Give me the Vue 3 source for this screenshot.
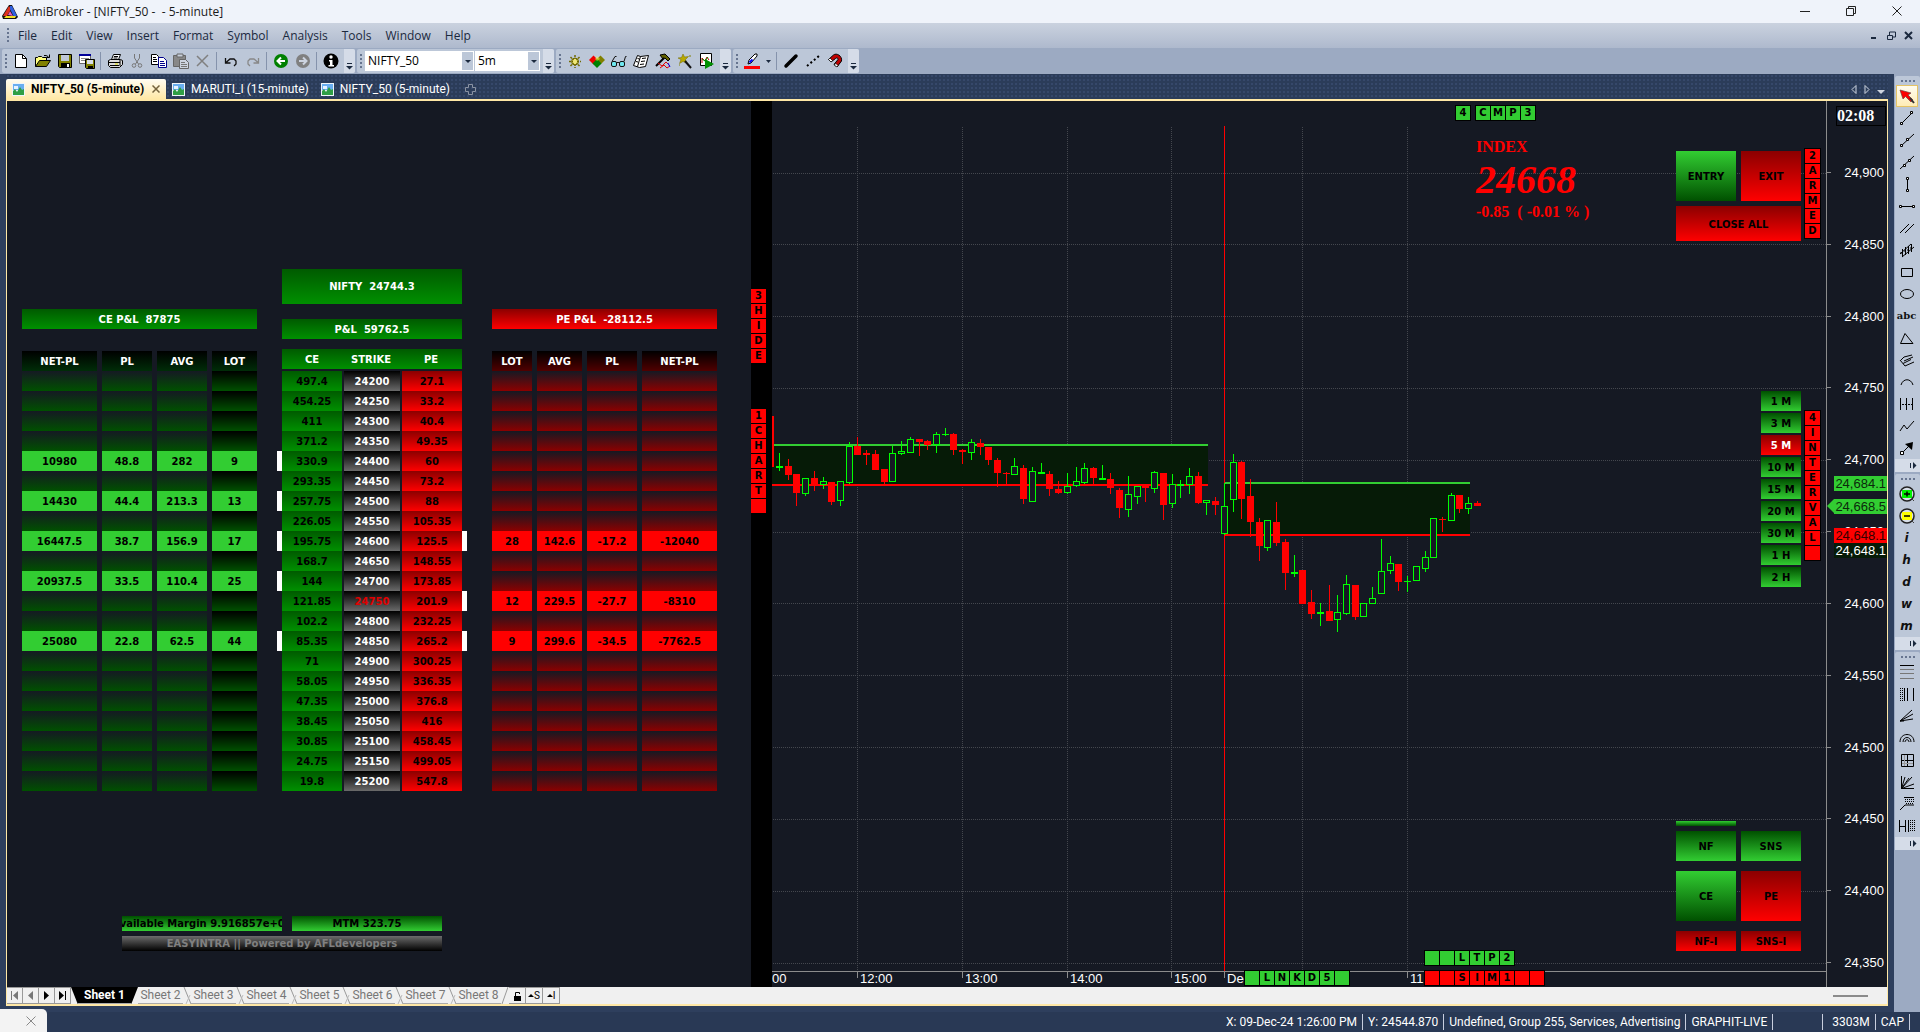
<script setup>
const menus = ['File', 'Edit', 'View', 'Insert', 'Format', 'Symbol', 'Analysis', 'Tools', 'Window', 'Help']

const icons = {
  newFile: '<path d="M2.5 1.5h7l4 4v9h-11z" fill="#fff" stroke="#000"/><path d="M9.5 1.5v4h4" fill="none" stroke="#000"/>',
  open: '<path d="M0.500 13.500v-9h2l1-1h3l1 1h4v3" fill="#ffff80" stroke="#000"/><path d="M0.500 13.500l4-6h11l-4 6z" fill="#808000" stroke="#000"/><path d="M9 2.500h2l2 1 1 1M14.500 1.500v3h-3" fill="none" stroke="#000"/>',
  save: '<path d="M1.500 1.500h13v13h-12l-1-1z" fill="#808000" stroke="#000"/><path d="M4 2h8v6H4z" fill="#c0c8d8"/><path d="M4 10h9v4H4z" fill="#000"/><path d="M10 11h2v3h-2z" fill="#fff"/>',
  saveAll: '<path d="M0.500 1.500h11v9h-11z" fill="#fff" stroke="#666"/><path d="M0 1h12v2H0z" fill="#00009a"/><path d="M2 5.500h8M2 7.500h4" stroke="#888"/><path d="M6.500 6.500h9v9h-8l-1-1z" fill="#808000" stroke="#000"/><path d="M8 7h6v4H8z" fill="#d8dde8"/><path d="M9 13h5v2H9z" fill="#000"/>',
  print: '<path d="M4.500 6.500l2-5h7l-2 5" fill="#fff" stroke="#000"/><path d="M7 3.500h4M6.500 5h4" stroke="#000"/><path d="M1.500 7.500l2-1h10l2 1v4l-3 3h-9l-2-2z" fill="#ddd" stroke="#000"/><path d="M2 9.500h11M3 12.500h9M13 7v6" stroke="#000" fill="none"/><path d="M8 11h3" stroke="#dd0" stroke-width="1"/>',
  cut: '<g fill="none" stroke="#777"><path d="M5.500 1v4l4 6M10.500 1v4l-4 6"/><circle cx="5" cy="12.500" r="1.800"/><circle cx="11" cy="12.500" r="1.800"/></g>',
  copy: '<path d="M.500 1.500h5l2 2v8h-7z" fill="#fff" stroke="#000"/><path d="M2 4.500h3M2 6.500h4M2 8.500h4" stroke="#000"/><path d="M7.500 4.500h5l3 3v7h-8z" fill="#fff" stroke="#00008b"/><path d="M9 8.500h4M9 10.500h5M9 12.500h5" stroke="#00008b"/>',
  paste: '<path d="M.500 2.500h12v11h-12z" fill="#888" stroke="#666"/><path d="M4 1h6v3H4z" fill="#c8cfda" stroke="#666"/><path d="M6.500 6.500h6l3 3v6h-9z" fill="#cdd4e0" stroke="#666"/><path d="M8 9.500h4M8 11.500h6M8 13.500h6" stroke="#777"/>',
  del: '<path d="M2 3l11 11M13 2L2 13" stroke="#808080" stroke-width="1.500" fill="none"/>',
  undo: '<path d="M2.500 5v5h5M3 9.500l4-3.500h4l2 2v3l-2 2" fill="none" stroke="#111" stroke-width="1.300"/>',
  redo: '<path d="M13.500 5v5h-5M13 9.500L9 6H5L3 8v3l2 2" fill="none" stroke="#888" stroke-width="1.300"/>',
  back: '<circle cx="8" cy="8" r="7" fill="#008000"/><path d="M12 8H5M8 4.500L4.500 8 8 11.500" fill="none" stroke="#fff" stroke-width="2"/>',
  fwd: '<circle cx="8" cy="8" r="7" fill="#808080"/><path d="M4 8h7M8 4.500L11.500 8 8 11.500" fill="none" stroke="#ccd3df" stroke-width="2"/>',
  info: '<circle cx="8" cy="8" r="7.500" fill="#000"/><circle cx="8" cy="4" r="1.700" fill="#fff"/><path d="M6 7h3.500v5H11v1.500H5.500V12H7V8.500H6z" fill="#fff"/>',
  gear: '<circle cx="8" cy="8.500" r="3.500" fill="#f0e878" stroke="#706800"/><path d="M8 2v4M8 11v4M2 8.500h4M10 8.500h4M3.500 4l3 3M12.500 4l-3 3M3.500 13l3-3M12.500 13l-3-3" stroke="#706800" stroke-width="1.500" stroke-dasharray="2 1"/>',
  gems: '<path d="M4.500 2.500L9 7l-4.500 4.500L0 7z" fill="#f00000"/><path d="M11.500 2.500L16 7l-4.500 4.500L7 7z" fill="#808000"/><path d="M8 6l4.500 4.500L8 15l-4.500-4.500z" fill="#008000"/><path d="M8 3l3 3-3 2-2-2z" fill="#ffff40" opacity=".5"/>',
  glasses: '<g stroke="#111" fill="#6fe8f0"><rect x=".500" y="8.500" width="5" height="5" rx="1.500"/><rect x="8.500" y="8.500" width="5" height="5" rx="1.500"/><path d="M5.500 9.500h3M1 8.500l3-5h1.500M13 8.500l1.500-5h1" fill="none"/></g>',
  book: '<path d="M4.500 2.500l3 1 8-1-3 11-6 1-6-2z" fill="#fff" stroke="#000"/><path d="M7.500 3.500l-3 10M9 5.500l4-.500M8 8.500l4-.500M7 11.500l4-.500M4.500 5.500l2 .500M3 8.500l2 .500" stroke="#000" fill="none"/>',
  hammer: '<path d="M5 2l5-1 5 5-2 2-3-3-2 1z" fill="#606000" stroke="#000"/><path d="M9 5L1 13" stroke="#000" stroke-width="2"/><path d="M3 10l4 3 4-4 4 4-3 2-3-3-4 3" stroke="#e00000" fill="none"/><path d="M13 10l2 4" stroke="#00f"/>',
  wand: '<path d="M6 1l1.500 3 4-.500-3 3 1.500 4-4-2-3.500 2L4 6.500 1 5l3.500-.500z" fill="#b8a800" stroke="#706800" stroke-width=".500"/><path d="M8 8l6 7" stroke="#111" stroke-width="2"/><path d="M12 3h2M2 12h1" stroke="#808000"/>',
  explore: '<path d="M1.500 .500h11v12h-11z" fill="#fff" stroke="#000"/><path d="M3 10V5l3 3 2-4 2 3" fill="none" stroke="#c00000"/><path d="M3 6l3 2 3-4" stroke="#080" fill="none"/><path d="M6 6l9 5-9 5z" fill="#009000"/>',
  pen: '<path d="M0 13h16v3H0z" fill="#f00"/><path d="M4 11l1-4 6-6h2v2l-6 7z" fill="#fff" stroke="#000"/><path d="M5.500 9.500l3-3" stroke="#00f" stroke-width="2"/>',
  thick: '<path d="M3 13L13 3" stroke="#000" stroke-width="3.500" stroke-linecap="round"/>',
  dots: '<path d="M2 13L14 3" stroke="#000" stroke-width="2" stroke-dasharray="2 2.500"/>',
  magnet: '<path d="M1.500 6.500l5-4.500c3-2.500 9 1 8 6l-4.500 6-3-2.500 4-5c0-2-1.500-2-2.500-1L4 9z" fill="#c00000" stroke="#000"/><path d="M1.500 6.500l1.500-1.500 2.500 2.500L4 9zM8.500 10l2.500 2.500-1.500 1.500-2-2z" fill="#fff" stroke="#000" stroke-width=".700"/>',
  arrow: '<path d="M1 2l3 9 2.500-2.500L12 14l2-2-5-5 3-2z" fill="#f00" stroke="#6b4040" stroke-width=".700"/><path d="M11 10l4 5" stroke="#333" stroke-width="2"/>',
  seg: '<path d="M3 13L13 3" stroke="#000"/><path d="M1.500 12.500h2v2h-2zM11.500 1.500h2v2h-2z" fill="#fff" stroke="#000"/>',
  ray: '<path d="M2 14L15 2" stroke="#000"/><path d="M1.500 12.500h2v2h-2zM7.500 6.500h2v2h-2z" fill="#fff" stroke="#000"/>',
  line: '<path d="M1 15L15 2" stroke="#000"/><path d="M4.500 10.500h2v2h-2zM9.500 5.500h2v2h-2z" fill="#fff" stroke="#000"/>',
  vert: '<path d="M8.500 3v11" stroke="#000"/><path d="M7.500 1.500h2v2h-2zM7.500 13.500h2v2h-2z" fill="#fff" stroke="#000"/>',
  horiz: '<path d="M2 8.500h12" stroke="#000"/><path d="M.500 7.500h2v2h-2zM13.500 7.500h2v2h-2z" fill="#fff" stroke="#000"/>',
  para: '<path d="M1 13L10 4M6 13L15 4" stroke="#000"/>',
  regress: '<path d="M1 12L12 2M3 15L15 5" stroke="#000"/><path d="M3.500 7v8M6.500 5v8M9.500 4v8M12.500 2v8M1 11h2M5 9h2M8 8h2M11 6h2" stroke="#000"/>',
  rect: '<path d="M2.500 4.500h11v8h-11z" fill="none" stroke="#000"/>',
  ellipse: '<ellipse cx="8" cy="8" rx="6.500" ry="4.500" fill="none" stroke="#000"/>',
  tri: '<path d="M1.500 13.500L6 3.500l8 10z" fill="none" stroke="#000"/>',
  fork: '<path d="M2 8l3-3 8-2M1 8l5 6M5 9l9-4M6 14l9-4M4 11.500l8-4" stroke="#000" fill="none"/>',
  arc: '<path d="M2 11c2-7 10-7 12 0" fill="none" stroke="#000"/>',
  cycle: '<path d="M1.500 2v12M7.500 2v12M13.500 2v12" stroke="#000"/><path d="M3 8.500h10" stroke="#000" stroke-dasharray="2 1"/>',
  zig: '<path d="M1 13l4-6 3 4 7-8" fill="none" stroke="#000"/>',
  vec: '<path d="M3 13l7-7" stroke="#000"/><path d="M14 2l-1 8-7-6z" fill="#000"/><path d="M1.500 11.500h3v3h-3z" fill="#fff" stroke="#000"/>',
  zoomIn: '<circle cx="8" cy="8" r="7" fill="#d8dfe8" stroke="#222" stroke-width="1.500"/><path d="M3 4h10v8H3z" fill="#00f000"/><path d="M5 8h6M8 5.500v5" stroke="#000" stroke-width="1.500"/><path d="M13 13l2 2" stroke="#444"/>',
  zoomOut: '<circle cx="8" cy="8" r="7" fill="#d8dfe8" stroke="#222" stroke-width="1.500"/><path d="M3 4h10v8H3z" fill="#ffff00"/><path d="M5 8h6" stroke="#000" stroke-width="1.500"/><path d="M13 13l2 2" stroke="#444"/>',
  fibo: '<path d="M1 1.500h14" stroke="#000"/><path d="M1 5.500h14M1 9.500h14M1 14.500h14" stroke="#777"/>',
  fiboTime: '<path d="M1.500 2v13M3.500 2v13" stroke="#000" stroke-dasharray="1 1"/><path d="M5.500 2v13M8.500 2v13M14.500 2v13" stroke="#000"/>',
  fan: '<path d="M1 13L13 2M1 13l13-7M1 13l13-2M1 13h4" stroke="#000" fill="none"/>',
  arcs: '<path d="M1 12c0-10 14-10 14 0M4 12c0-6 8-6 8 0M6 12c0-3 4-3 4 0" fill="none" stroke="#000"/>',
  gannSq: '<path d="M2.500 2.500h12v12h-12zM8.500 2v12M2 8.500h12" fill="none" stroke="#000"/><path d="M5.500 3v11M3 11.500h11" stroke="#999"/>',
  gannFan: '<path d="M2.500 2v12.500H15M2.500 14.500L6 3M2.500 14.500L13 3M2.500 14.500L15 10M2.500 14.500L10 4" fill="none" stroke="#000"/>',
  pitch: '<path d="M1 14l5-5h9M5 1.500h10" fill="none" stroke="#000"/><path d="M6 3.500h9M6 5.500h9M7 7.500h8" stroke="#000" stroke-dasharray="1 1"/>',
  tzone: '<path d="M.500 2v12M6.500 2v12M1 8.500h6M9.500 2v12" stroke="#000"/><path d="M11.500 2v12M13.500 2v12M15.500 2v12" stroke="#000" stroke-dasharray="1 1"/>',
}

const fileTools = ['newFile', 'open', 'save', 'saveAll', '|', 'print', 'cut', 'copy', 'paste', 'del', '|', 'undo', 'redo', '|', 'back', 'fwd', '|', 'info']
const analysisTools = ['gear', 'gems', 'glasses', 'book', 'hammer', 'wand', 'explore']
const lineTools = ['thick', 'dots', 'magnet']
const sideGroups = [
  ['arrow', 'seg', 'ray', 'line', 'vert', 'horiz', 'para', 'regress', 'rect', 'ellipse', 't:abc', 'tri', 'fork', 'arc', 'cycle', 'zig', 'vec'],
  ['zoomIn', 'zoomOut', 't:i', 't:h', 't:d', 't:w', 't:m'],
  ['fibo', 'fiboTime', 'fan', 'arcs', 'gannSq', 'gannFan', 'pitch', 'tzone'],
]

const docTabs = ['NIFTY_50 (5-minute)', 'MARUTI_I (15-minute)', 'NIFTY_50 (5-minute)']
const sheets = [1, 2, 3, 4, 5, 6, 7, 8]

// strike, CE price, PE price
const chain = [
  [24200, '497.4', '27.1'], [24250, '454.25', '33.2'], [24300, '411', '40.4'], [24350, '371.2', '49.35'],
  [24400, '330.9', '60'], [24450, '293.35', '73.2'], [24500, '257.75', '88'], [24550, '226.05', '105.35'],
  [24600, '195.75', '125.5'], [24650, '168.7', '148.55'], [24700, '144', '173.85'], [24750, '121.85', '201.9'],
  [24800, '102.2', '232.25'], [24850, '85.35', '265.2'], [24900, '71', '300.25'], [24950, '58.05', '336.35'],
  [25000, '47.35', '376.8'], [25050, '38.45', '416'], [25100, '30.85', '458.45'], [25150, '24.75', '499.05'],
  [25200, '19.8', '547.8'],
]
const atm = 24750
const cePos = {
  24400: ['10980', '48.8', '282', '9'],
  24500: ['14430', '44.4', '213.3', '13'],
  24600: ['16447.5', '38.7', '156.9', '17'],
  24700: ['20937.5', '33.5', '110.4', '25'],
  24850: ['25080', '22.8', '62.5', '44'],
}
const pePos = {
  24600: ['28', '142.6', '-17.2', '-12040'],
  24750: ['12', '229.5', '-27.7', '-8310'],
  24850: ['9', '299.6', '-34.5', '-7762.5'],
}
const blank = ['', '', '', '']

// price scale of the chart pane
const H = 886
const W = 1054
const priceY = p => 72 + (24900 - p) * 1.4364
const pct = p => (priceY(p) / H) * 100 + '%'
const prices = [24900, 24850, 24800, 24750, 24700, 24650, 24600, 24550, 24500, 24450, 24400, 24350]
const fmt = p => p.toLocaleString('en-US')
const tags = [
  { p: 24684.1, cls: 'up' },
  { p: 24668.5, cls: 'last' },
  { p: 24648.1, cls: 'down' },
]
const gridX = [85, 190, 295, 399, 530, 635]
const times = [
  { x: 0, t: '00' }, { x: 88, t: '12:00' }, { x: 193, t: '13:00' }, { x: 298, t: '14:00' },
  { x: 402, t: '15:00' }, { x: 455, t: 'Dec' }, { x: 638, t: '11' },
]

// direction, high, body top, body bottom, low
const raw = `g 53 66 68 71;r 59 66 75 80;r 74 74 93 106;g 78 78 94 96;r 71 78 86 91;g 77 81 85 89;r 82 82 102 105;g 81 81 101 106;g 42 46 83 84;r 37 46 55 55;r 50 53 55 65;r 50 54 70 70;r 69 69 82 84;g 46 53 82 82;g 41 51 54 55;g 37 39 53 53;r 39 39 42 56;r 40 41 45 50;g 32 34 45 53;g 28 34 35 36;r 33 34 50 55;r 49 50 52 64;g 39 42 53 60;r 39 43 47 55;r 47 47 60 65;r 58 60 73 87;r 72 73 74 84;g 58 66 75 75;r 65 68 99 104;g 67 71 102 102;g 63 72 74 74;r 71 74 89 96;r 81 89 93 94;g 73 86 93 94;g 67 81 86 87;g 63 68 83 84;r 67 68 78 84;g 65 78 80 80;r 73 79 88 94;r 88 90 108 118;g 76 94 110 117;g 86 86 97 104;r 86 86 88 102;g 71 72 89 93;r 73 73 105 120;g 74 84 104 108;g 80 84 86 98;g 68 76 85 94;r 72 76 103 104;g 100 100 103 115;r 97 101 105 115;g 83 106 134 135;g 54 62 100 112;r 61 62 99 119;r 79 96 122 137;r 118 122 146 161;g 120 120 148 151;r 102 122 143 146;r 139 142 173 190;g 155 172 174 177;r 170 170 204 204;r 190 202 214 219;g 203 212 214 226;r 185 211 221 221;g 195 212 220 232;g 175 184 214 215;r 185 185 217 220;g 203 203 217 217;g 187 198 204 204;g 139 171 194 194;g 156 163 171 174;r 164 164 182 191;g 176 181 182 192;g 166 166 181 181;g 151 157 169 172;g 118 118 158 158;r 117 119 120 132;g 93 95 121 121;r 95 95 109 113;g 97 103 109 114;r 101 103 106 106`
const candles = raw.split(';').map((row, i) => {
  const [dir, high, top, bottom, low] = row.split(' ')
  return { dir, x: Math.floor(7.4 + i * 8.725), high: 299 + +high, top: 299 + +top, bottom: 299 + +bottom, low: 299 + +low }
})

const intervals = ['1 M', '3 M', '5 M', '10 M', '15 M', '20 M', '30 M', '1 H', '2 H']
const letters = s => s.split('')
</script>

<template>
  <div class="app">
    <header class="titlebar">
      <svg class="logo" viewBox="0 0 16 16" width="16" height="16">
        <path d="M7 1h3l6 12-2 2H1l-1-3z" fill="#111" />
        <path d="M7 2L1 12h4l4-7z" fill="#e03020" />
        <path d="M8 2l2 0 5 10-3 1-4-8z" fill="#3060e0" />
        <path d="M2 14l2-2h10l-1 2z" fill="#f4e020" />
        <path d="M6 11l2-4 3 5z" fill="#e060c0" />
      </svg>
      <span class="grow">AmiBroker - [NIFTY_50 -&nbsp; - 5-minute]</span>
      <button class="winbtn" aria-label="Minimize"><svg width="11" height="11"><path d="M0 5.500h10" stroke="#222" /></svg></button>
      <button class="winbtn" aria-label="Restore"><svg width="11" height="11"><path d="M.500 2.500h7v7h-7zM2.500 2.500v-2h7v7h-2" fill="none" stroke="#222" /></svg></button>
      <button class="winbtn" aria-label="Close"><svg width="11" height="11"><path d="M.500.500l9 9M9.500.500l-9 9" stroke="#222" /></svg></button>
    </header>

    <nav class="menubar">
      <span class="grip"></span>
      <button v-for="m in menus" :key="m" class="menu">{{ m }}</button>
      <span class="grow"></span>
      <button class="mdi" aria-label="Minimize sheet"><svg width="9" height="9"><path d="M1 7h5" stroke="#1b293e" stroke-width="2" /></svg></button>
      <button class="mdi" aria-label="Restore sheet"><svg width="9" height="9"><path d="M.500 4.500h5v4h-5zM2.500 4v-3h6v5H6" fill="none" stroke="#1b293e" /></svg></button>
      <button class="mdi" aria-label="Close sheet"><svg width="9" height="9"><path d="M1 1l7 7M8 1L1 8" stroke="#1b293e" stroke-width="2" /></svg></button>
    </nav>

    <div class="toolrow">
      <div class="toolgroup">
        <span class="grip"></span>
        <template v-for="(t, i) in fileTools" :key="i">
          <span v-if="t === '|'" class="sep"></span>
          <button v-else class="tool" :aria-label="t"><svg viewBox="0 0 16 16" width="16" height="16" v-html="icons[t]"></svg></button>
        </template>
        <button class="more" aria-label="More"><svg width="7" height="7"><path d="M1 .500h5" stroke="#1b293e" /><path d="M0 3h7L3.500 6.500z" fill="#1b293e" /></svg></button>
      </div>
      <div class="toolgroup">
        <span class="grip"></span>
        <label class="combo symbol"><select aria-label="Symbol"><option>NIFTY_50</option></select><i></i></label>
        <label class="combo period"><select aria-label="Interval"><option>5m</option></select><i></i></label>
        <button class="more" aria-label="More"><svg width="7" height="7"><path d="M1 .500h5" stroke="#1b293e" /><path d="M0 3h7L3.500 6.500z" fill="#1b293e" /></svg></button>
      </div>
      <div class="toolgroup">
        <span class="grip"></span>
        <button v-for="t in analysisTools" :key="t" class="tool" :aria-label="t"><svg viewBox="0 0 16 16" width="16" height="16" v-html="icons[t]"></svg></button>
        <button class="more" aria-label="More"><svg width="7" height="7"><path d="M1 .500h5" stroke="#1b293e" /><path d="M0 3h7L3.500 6.500z" fill="#1b293e" /></svg></button>
      </div>
      <div class="toolgroup">
        <span class="grip"></span>
        <button class="tool" aria-label="pen"><svg viewBox="0 0 16 16" width="16" height="16" v-html="icons.pen"></svg></button>
        <button class="drop" aria-label="Line colour"><svg width="5" height="3"><path d="M0 0h5L2.500 3z" fill="#1b293e" /></svg></button>
        <span class="sep"></span>
        <button v-for="t in lineTools" :key="t" class="tool" :aria-label="t"><svg viewBox="0 0 16 16" width="16" height="16" v-html="icons[t]"></svg></button>
        <button class="more" aria-label="More"><svg width="7" height="7"><path d="M1 .500h5" stroke="#1b293e" /><path d="M0 3h7L3.500 6.500z" fill="#1b293e" /></svg></button>
      </div>
    </div>

    <div class="body">
      <div class="docarea">
        <div class="tabs">
          <button v-for="(t, i) in docTabs" :key="i" class="tab" :class="{ active: i === 0 }">
            <svg width="13" height="13" viewBox="0 0 13 13">
              <rect width="13" height="13" fill="#eef4fa" /><rect x="1" y="1" width="11" height="6" fill="#69aef0" />
              <path d="M1 12V8l2-2 2 3 3-5 2 3 2-1v6z" fill="#2f9f45" /><path d="M2 3h4v3H2z" fill="#e6f2ff" />
            </svg>
            <span>{{ t }}</span>
            <svg v-if="i === 0" class="tabclose" width="8" height="8"><path d="M.500.500l7 7M7.500.500l-7 7" stroke="#75633d" stroke-width="1.500" /></svg>
          </button>
          <button class="addtab" aria-label="New tab"><svg width="11" height="11"><path d="M3.500.500h4v3h3v4h-3v3h-4v-3h-3v-4h3z" fill="none" stroke="#8a93a3" /></svg></button>
          <span class="grow"></span>
          <div class="tabnav">
            <svg width="6" height="9"><path d="M5 .500v8L1 4.500z" fill="none" stroke="#ced4df" /></svg>
            <svg width="6" height="9"><path d="M1 .500v8l4-4z" fill="none" stroke="#ced4df" /></svg>
            <svg class="fill" width="8" height="4"><path d="M0 0h8L4 4z" fill="#ced4df" /></svg>
          </div>
        </div>

        <main class="frame">
          <div class="panes">
            <section class="chainpane">
              <div class="columns">
                <div class="side">
                  <div class="bar green">CE P&amp;L&nbsp; 87875</div>
                  <table class="grid ce">
                    <colgroup><col class="w75" /><col class="w55" /><col class="w55" /><col class="w50" /></colgroup>
                    <thead><tr><th>NET-PL</th><th>PL</th><th>AVG</th><th>LOT</th></tr></thead>
                    <tbody>
                      <tr v-for="r in chain" :key="r[0]" :class="{ held: cePos[r[0]] }">
                        <td v-for="(v, j) in cePos[r[0]] || blank" :key="j">{{ v }}</td>
                      </tr>
                    </tbody>
                  </table>
                </div>
                <div class="middle">
                  <div class="bar green tall">NIFTY&nbsp; 24744.3</div>
                  <div class="bar green total">P&amp;L&nbsp; 59762.5</div>
                  <table class="grid strikes">
                    <colgroup><col class="w60" /><col class="w58" /><col class="w62" /></colgroup>
                    <thead><tr><th>CE</th><th>STRIKE</th><th>PE</th></tr></thead>
                    <tbody>
                      <tr v-for="r in chain" :key="r[0]">
                        <td class="call" :class="{ mark: cePos[r[0]] }">{{ r[1] }}</td>
                        <td class="strike" :class="{ atm: r[0] === atm }">{{ r[0] }}</td>
                        <td class="put" :class="{ mark: pePos[r[0]] }">{{ r[2] }}</td>
                      </tr>
                    </tbody>
                  </table>
                </div>
                <div class="side pe-side">
                  <div class="bar red">PE P&amp;L&nbsp; -28112.5</div>
                  <table class="grid pe">
                    <colgroup><col class="w40" /><col class="w50" /><col class="w55" /><col class="w80" /></colgroup>
                    <thead><tr><th>LOT</th><th>AVG</th><th>PL</th><th>NET-PL</th></tr></thead>
                    <tbody>
                      <tr v-for="r in chain" :key="r[0]" :class="{ held: pePos[r[0]] }">
                        <td v-for="(v, j) in pePos[r[0]] || blank" :key="j">{{ v }}</td>
                      </tr>
                    </tbody>
                  </table>
                </div>
              </div>
              <div class="account">
                <div class="acc"><span>Available Margin 9.916857e+05</span></div>
                <div class="acc"><span>MTM 323.75</span></div>
                <div class="acc brand"><span>EASYINTRA || Powered by AFLdevelopers</span></div>
              </div>
            </section>

            <div class="rail">
              <div class="cells vert red"><b v-for="(c, i) in letters('3HIDE')" :key="i">{{ c }}</b></div>
              <div class="cells vert red second"><b v-for="(c, i) in letters('1CHART ')" :key="i">{{ c }}</b></div>
            </div>

            <section class="chartpane">
              <div class="plot">
                <svg class="canvas" :viewBox="`0 0 ${W} ${H}`" preserveAspectRatio="none" shape-rendering="crispEdges">
                  <g stroke="#44474e" stroke-dasharray="1 1">
                    <line v-for="p in prices" :key="p" x1="1" :x2="W" :y1="Math.floor(priceY(p)) + 0.5" :y2="Math.floor(priceY(p)) + 0.5" />
                    <line v-for="x in gridX" :key="x" :x1="x + 0.5" :x2="x + 0.5" y1="26" y2="870" />
                  </g>
                  <rect x="0" y="344" width="436" height="41" fill="#061b07" />
                  <rect x="453" y="382" width="245" height="53" fill="#061b07" />
                  <rect x="2" y="343" width="434" height="2" fill="#32cd32" />
                  <rect x="0" y="383" width="436" height="2" fill="#f00" />
                  <rect x="452" y="25" width="1" height="845" fill="#f00" />
                  <rect x="453" y="381" width="245" height="2" fill="#32cd32" />
                  <rect x="453" y="433" width="245" height="2" fill="#f00" />
                  <rect x="0" y="315" width="2" height="51" fill="#f00" />
                  <g v-for="(c, i) in candles" :key="i">
                    <rect :x="c.x" :y="c.high" width="1" :height="c.low - c.high" :fill="c.dir === 'g' ? '#0f0' : '#f00'" />
                    <rect :x="c.x - 3" :y="c.top" width="7" :height="c.bottom - c.top" :fill="c.dir === 'g' ? '#0f0' : '#f00'" />
                    <rect v-if="c.dir === 'g' && c.bottom - c.top > 2" :x="c.x - 2" :y="c.top + 1" width="5" :height="c.bottom - c.top - 2" fill="#151923" />
                  </g>
                  <g fill="#8c8c8c">
                    <rect x="0" y="870" :width="W" height="1" />
                    <rect v-for="x in gridX" :key="x" :x="x" y="870" width="1" height="7" />
                    <rect x="452" y="870" width="1" height="7" />
                  </g>
                </svg>
                <span v-for="t in times" :key="t.t" class="time" :style="{ left: (t.x / W) * 100 + '%' }">{{ t.t }}</span>

                <div class="cells green top4"><b>4</b></div>
                <div class="cells green cmp"><b v-for="c in letters('CMP3')" :key="c">{{ c }}</b></div>
                <div class="index">
                  <p>INDEX</p>
                  <p class="big">24668</p>
                  <p>-0.85&nbsp; ( -0.01 % )</p>
                </div>
                <div class="orders">
                  <button class="btn lime">ENTRY</button>
                  <button class="btn crimson">EXIT</button>
                  <button class="btn crimson wide">CLOSE ALL</button>
                </div>
                <div class="cells vert red armed"><b v-for="c in letters('2ARMED')" :key="c">{{ c }}</b></div>
                <div class="intervals">
                  <button v-for="t in intervals" :key="t" class="btn" :class="t === '5 M' ? 'crimson on' : 'rise'">{{ t }}</button>
                </div>
                <div class="cells vert red interval"><b v-for="(c, i) in letters('4INTERVAL ')" :key="i">{{ c }}</b></div>
                <div class="quick">
                  <button class="btn lime thin" aria-label="Spot"></button><span></span>
                  <button class="btn rise mid">NF</button><button class="btn rise mid">SNS</button>
                  <button class="btn lime tallb">CE</button><button class="btn crimson tallb">PE</button>
                  <button class="btn crimson">NF-I</button><button class="btn crimson">SNS-I</button>
                </div>
                <div class="cells green ltp"><b v-for="(c, i) in letters('  LTP2')" :key="i">{{ c }}</b></div>
                <div class="cells red sim"><b v-for="(c, i) in letters('  SIM1  ')" :key="i">{{ c }}</b></div>
                <div class="cells green lnk"><b v-for="(c, i) in letters(' LNKD5 ')" :key="i">{{ c }}</b></div>
              </div>
              <div class="axis">
                <div class="clock">02:08</div>
                <span v-for="p in prices" :key="p" class="price" :style="{ top: pct(p) }">{{ fmt(p) }}</span>
                <span v-for="t in tags" :key="t.p" class="tag" :class="t.cls" :style="{ top: pct(t.p) }">{{ fmt(t.p) }}</span>
                <span class="tag below" :style="{ top: pct(24648.1) }">24,648.1</span>
              </div>
            </section>
          </div>

          <footer class="sheets">
            <button class="nav" aria-label="First"><svg width="9" height="9"><path d="M1.500 0v9" stroke="#777" stroke-width="1" /><path d="M8 0v9L3 4.500z" fill="#777" /></svg></button>
            <button class="nav" aria-label="Previous"><svg width="9" height="9"><path d="M7 0v9L2 4.500z" fill="#777" /></svg></button>
            <button class="nav" aria-label="Next"><svg width="9" height="9"><path d="M2 0v9l5-4.500z" fill="#000" /></svg></button>
            <button class="nav" aria-label="Last"><svg width="9" height="9"><path d="M7.500 0v9" stroke="#000" stroke-width="1" /><path d="M1 0v9l5-4.500z" fill="#000" /></svg></button>
            <template v-for="s in sheets" :key="s">
              <button class="sheet" :class="{ current: s === 1 }">Sheet {{ s }}</button>
              <svg v-if="s > 1" class="slash" width="9" height="17"><path v-if="s < 8" d="M1 0l7 17" stroke="#999" /><path v-if="s < 8" d="M7 8L3 17" stroke="#bbb" /><path v-else d="M7 0L1 17" stroke="#999" /></svg>
            </template>
            <button class="nav lock" aria-label="Lock"><svg width="9" height="10"><path d="M1 5h7v5H1z" fill="#000" /><path d="M2.500 5V1.500h4V3" fill="none" stroke="#000" /></svg></button>
            <button class="nav txt"><i></i>S</button>
            <button class="nav txt"><i></i>I</button>
            <span class="grow"></span>
            <span class="thumb"></span>
          </footer>
        </main>
      </div>

      <aside class="sidebar">
        <div v-for="(g, gi) in sideGroups" :key="gi" class="sidegroup">
          <span class="hgrip"></span>
          <button v-for="t in g" :key="t" class="stool" :class="{ active: t === 'arrow' }" :aria-label="t">
            <em v-if="t.startsWith('t:')" :class="{ abc: t === 't:abc' }">{{ t.slice(2) }}</em>
            <svg v-else viewBox="0 0 16 16" width="16" height="16" v-html="icons[t]"></svg>
          </button>
          <button class="sidemore" aria-label="More"><svg width="7" height="7"><path d="M.500 1v5" stroke="#1b293e" /><path d="M3 0v7l3.500-3.500z" fill="#1b293e" /></svg></button>
        </div>
      </aside>
    </div>

    <footer class="status">
      <div class="ghost"><svg width="10" height="10"><path d="M.500.500l9 9M9.500.500l-9 9" stroke="#888" /></svg></div>
      <span class="grow"></span>
      <span class="st">X: 09-Dec-24 1:26:00 PM</span>
      <span class="st">Y: 24544.870</span>
      <span class="st">Undefined, Group 255, Services, Advertising</span>
      <span class="st">GRAPHIT-LIVE</span>
      <span class="st empty"></span>
      <span class="st mem">3303M</span>
      <span class="st">CAP</span>
    </footer>
  </div>
</template>

<style>
body { margin: 0; }
</style>

<style scoped>
.app { min-height: 100vh; display: flex; flex-direction: column; background: #2e3f5d; font: 12px/16px "Open Sans", "Noto Sans", sans-serif; color: #1b293e; }
button, select { font: inherit; color: inherit; border: 0; padding: 0; margin: 0; background: none; }
button { display: flex; align-items: center; justify-content: center; white-space: nowrap; }
svg { display: block; flex: none; }
.grow { flex: 1; }

.titlebar { height: 23px; display: flex; align-items: center; padding-left: 2px; background: #eff3fa; color: #1a1a1a; }
.logo { margin-right: 6px; }
.winbtn { width: 46px; height: 22px; }

.menubar { height: 25px; display: flex; align-items: center; background: linear-gradient(#cad2df, #aeb9cd); padding: 0 3px 0 4px; }
.menubar .grip { margin-right: 5px; }
.menu { padding: 0 6px; height: 20px; margin-right: 2px; }
.menu:first-of-type { padding-left: 4px; }
.mdi { width: 17px; height: 16px; }
.grip { width: 2px; height: 15px; margin: 0 3px; background: repeating-linear-gradient(#66748f 0 2px, transparent 2px 4px); flex: none; }

.toolrow { height: 26px; display: flex; align-items: center; gap: 2px; padding-left: 2px; background: #9caac2; }
.toolgroup { height: 24px; display: flex; align-items: center; background: #bcc7d8; border-radius: 2px; overflow: hidden; }
.tool { width: 22px; height: 22px; }
.sep { width: 1px; height: 18px; background: #8593ac; margin: 0 3px 0 2px; }
.more { width: 11px; height: 24px; margin-left: 2px; background: #d5dce8; align-items: flex-end; padding-bottom: 3px; }
.drop { width: 11px; height: 22px; }
.combo { position: relative; height: 20px; margin-right: 1px; background: #fff; }
.symbol { width: 109px; }
.period { width: 65px; }
.combo select { appearance: none; width: 100%; height: 20px; padding-left: 3px; color: #000; background: transparent; outline: 0; border-radius: 0; }
.combo i { position: absolute; right: 1px; top: 1px; width: 11px; height: 18px; background: #bcc7d8; pointer-events: none; }
.combo i::after { content: ""; position: absolute; left: 3px; top: 8px; border: 3px solid transparent; border-top-color: #1b293e; border-bottom: 0; }

.body { flex: 1; display: flex; }
.docarea { flex: 1; min-width: 0; display: flex; flex-direction: column; padding: 0 6px 6px; background: #2e3f5d; }
.tabs { height: 25px; display: flex; align-items: flex-end; background: radial-gradient(#36486a 1px, transparent 1px) 0 0 / 4px 4px #2b3c59; color: #fff; font-family: Roboto, sans-serif; }
.tab { min-width: 145px; height: 20px; padding: 0 6px; gap: 6px; justify-content: flex-start; }
.tab.active { min-width: 160px; background: linear-gradient(#fffcf2, #ffe8a6); color: #000; font-weight: 700; border-radius: 2px 2px 0 0; }
.tabclose { margin-left: auto; }
.addtab { width: 22px; height: 20px; }
.tabnav { display: flex; align-items: center; gap: 7px; height: 20px; padding-right: 3px; }
.tabnav .fill { margin-top: 5px; }
.frame { flex: 1; display: flex; flex-direction: column; border: solid #ffe8a6; border-width: 2px 1px; }
.panes { flex: 1; display: flex; background: #151923; font: bold 10px/20px "DejaVu Sans", sans-serif; }

.chainpane { flex: 744 1 0; min-width: 0; overflow: hidden; color: #fff; }
.columns { display: flex; gap: 25px; padding: 168px 0 0 15px; }
.side { padding-top: 40px; }
.pe-side { margin-left: 5px; }
.bar { height: 20px; line-height: 22px; text-align: center; }
.green.bar { background: linear-gradient(#005a00, #009000); }
.red.bar { background: linear-gradient(#8b0000, #f00); }
.side .bar { margin-bottom: 22px; }
.tall.bar { height: 35px; line-height: 36px; margin-bottom: 15px; }
.total { margin-bottom: 10px; }
.grid { border-collapse: separate; border-spacing: 0; table-layout: fixed; text-align: center; }
.ce { width: 235px; }
.strikes { width: 180px; }
.pe { width: 225px; }
.w40 { width: 40px; } .w50 { width: 50px; } .w55 { width: 55px; } .w58 { width: 58px; } .w60 { width: 60px; }
.w62 { width: 62px; } .w75 { width: 75px; } .w80 { width: 80px; }
.grid th, .grid td { height: 18px; line-height: 18px; padding: 2px 0 0; background-clip: padding-box; }
.ce th + th, .ce td + td, .pe th + th, .pe td + td { border-left: 5px solid transparent; }
.strikes td + td { border-left: 2px solid transparent; }
.ce th { background-image: linear-gradient(#000, #002d08); }
.ce td { background-image: linear-gradient(#151923, #005000); }
.ce td:last-child { background-image: linear-gradient(#000, #005000); }
.ce .held td { background-image: none; background-color: #32cd32; color: #000; }
.pe th { background-image: linear-gradient(#000, #500000); }
.pe td { background-image: linear-gradient(#151923, #8b0000); }
.pe .held td { background-image: none; background-color: #f00; color: #000; }
.strikes th { border-bottom: 2px solid transparent; background-image: linear-gradient(#005a00, #009000); }
.call { background-image: linear-gradient(#005a00, #009000); color: #000; position: relative; }
.strike { background-image: linear-gradient(#000, #6a6a6a); color: #fff; }
.strike.atm { color: #e00000; }
.put { background-image: linear-gradient(#8b0000, #f00); color: #000; position: relative; }
.mark::after { content: ""; position: absolute; top: 0; width: 5px; height: 20px; background: #fff; }
.call.mark::after { left: -5px; }
.put.mark::after { right: -5px; }
.account { display: grid; grid-template-columns: 160px 150px; gap: 5px 10px; margin: 125px 0 0 115px; color: #000; }
.acc { height: 15px; line-height: 15px; display: flex; justify-content: center; overflow: hidden; white-space: nowrap; background: linear-gradient(#005000, #32cd32); }
.brand { grid-column: 1 / 3; background: linear-gradient(#6c6c6c, #000); color: #808080; }

.rail { width: 21px; background: #000; padding-top: 187px; box-sizing: border-box; flex: none; }
.cells { display: flex; color: #000; line-height: 14px; text-align: center; background: #000; padding: 1px; gap: 1px; width: max-content; box-sizing: border-box; }
.cells b { width: 14px; height: 14px; background: #32cd32; }
.cells.red b { background: #f00; }
.cells.vert { flex-direction: column; }
.cells.vert b { width: 15px; }
.rail .cells { padding-left: 0; }
.second { margin-top: 44px; }

.chartpane { flex: 1115 1 0; min-width: 0; display: flex; }
.plot { flex: 1; position: relative; min-width: 0; overflow: hidden; }
.canvas { position: absolute; width: 100%; height: 100%; }
.time { position: absolute; bottom: 0; font: 13px/16px "Liberation Sans", Arial, sans-serif; color: #fff; }
.plot .cells { position: absolute; }
.top4 { right: 355px; top: 4px; }
.cmp { right: 290px; top: 4px; }
.index { position: absolute; left: 704px; top: 36px; color: #f00; font: bold 16px/20px "Liberation Serif", serif; white-space: nowrap; }
.index p { margin: 0; }
.index .big { font-size: 40px; line-height: 45px; font-style: italic; }
.orders { position: absolute; right: 25px; top: 50px; display: grid; grid-template-columns: 60px 60px; grid-template-rows: 50px 35px; gap: 5px; }
.wide { grid-column: 1 / 3; }
.btn { color: #000; height: auto; min-height: 20px; padding-top: 2px; line-height: 18px; }
.lime { background: linear-gradient(#32cd32, #005000); }
.rise { background: linear-gradient(#005000, #32cd32); }
.crimson { background: linear-gradient(#8b0000, #f00); }
.on { color: #fff; }
.armed { right: 5px; top: 47px; }
.intervals { position: absolute; right: 25px; top: 290px; width: 40px; display: flex; flex-direction: column; gap: 2px; }
.interval { right: 5px; top: 309px; }
.quick { position: absolute; right: 25px; bottom: 36px; display: grid; grid-template-columns: 60px 60px; column-gap: 5px; }
.thin { min-height: 5px; height: 5px; margin-bottom: 5px; }
.mid { height: 30px; margin-bottom: 10px; }
.tallb { height: 50px; margin-bottom: 10px; }
.ltp { left: 652px; bottom: 21px; }
.sim { left: 652px; bottom: 1px; }
.lnk { left: 472px; bottom: 1px; }

.axis { width: 61px; position: relative; border-left: 1px solid #8c8c8c; box-sizing: border-box; font: 13px/15px "Liberation Sans", Arial, sans-serif; color: #fff; flex: none; }
.clock { position: absolute; right: 1px; top: 5px; width: 50px; height: 20px; box-sizing: border-box; border: 1px solid #000; font: bold 16px/18px "Liberation Serif", serif; }
.price { position: absolute; right: 3px; margin-top: -8px; }
.price::before { content: ""; position: absolute; right: 53px; top: 7px; width: 4px; height: 1px; background: #8c8c8c; }
.tag { position: absolute; right: 0; width: 53px; box-sizing: border-box; padding-right: 1px; margin-top: -7px; text-align: right; color: #0b2a0b; background: #32cd32; }
.tag.last::before { content: ""; position: absolute; left: -7px; top: 0; border: 7px solid transparent; border-right-color: #32cd32; border-left: 0; }
.tag.down { background: #f00; color: #300; }
.tag.below { background: #061b07; color: #fff; margin-top: 8px; }

.sheets { height: 17px; display: flex; background: #f0f0f0; color: #777; line-height: 16px; font-family: Roboto, sans-serif; }
.nav { width: 16px; height: 17px; box-sizing: border-box; border: solid #999; border-width: 1px 1px 1px 0; color: #000; }
.txt { font-size: 10px; }
.txt i { border: 3px solid transparent; border-bottom-color: #000; border-top: 0; }
.lock, .txt { width: 17px; }
.sheet { width: 45px; height: 17px; border-bottom: 1px solid #aaa; }
.sheet.current { width: 67px; background: #000; color: #fff; font-weight: 700; clip-path: polygon(0 0, 100% 0, 90% 100%, 10% 100%); }
.slash { width: 8px; }
.thumb { width: 35px; height: 2px; background: #8b8b8b; margin: 8px 19px 0 0; }

.sidebar { width: 26px; background: #9caac2; padding-top: 2px; box-sizing: border-box; display: flex; flex-direction: column; gap: 2px; flex: none; }
.sidegroup { margin-left: 1px; background: #bcc7d8; border-radius: 2px; display: flex; flex-direction: column; align-items: center; }
.hgrip { width: 14px; height: 2px; margin: 4px 0 3px; background: repeating-linear-gradient(90deg, #66748f 0 2px, transparent 2px 4px); }
.stool { width: 22px; height: 22px; margin-right: 2px; box-sizing: border-box; color: #111; }
.stool.active { border: 1px solid #e5c365; background: linear-gradient(#fffcf0, #ffecb5); }
.stool em { font: italic bold 12px/16px "DejaVu Sans", sans-serif; }
.stool em.abc { font: bold 10px/16px "DejaVu Serif", serif; }
.sidemore { width: 100%; height: 13px; background: #d5dce8; justify-content: flex-end; padding-right: 3px; box-sizing: border-box; }

.status { height: 20px; display: flex; align-items: center; background: #293955; color: #fff; position: relative; padding-right: 10px; font-family: Roboto, sans-serif; }
.ghost { position: absolute; left: 0; bottom: 0; width: 47px; height: 23px; background: #f3f3f3; border-radius: 0 5px 0 0; display: flex; align-items: center; justify-content: center; padding-left: 14px; box-sizing: border-box; }
.st { padding: 0 5px; border-right: 1px solid #c8cede; line-height: 16px; white-space: nowrap; }
.st.empty { width: 39px; height: 16px; }
.st.mem { padding-left: 9px; }
</style>
